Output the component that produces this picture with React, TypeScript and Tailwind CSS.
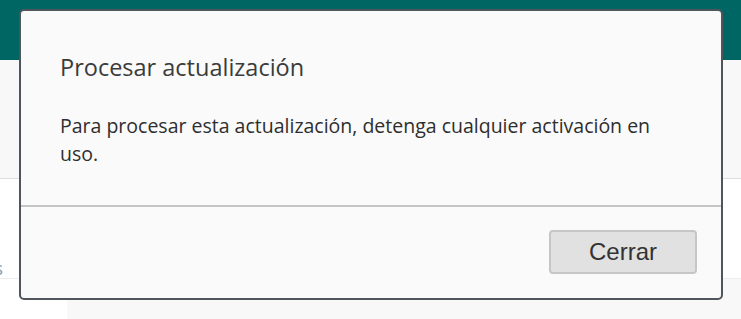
export default function App() {
    return (
        <div className="relative w-[741px] h-[319px] overflow-hidden bg-[#f8f8f8] font-['Open_Sans',sans-serif]">
            {/* page behind the modal */}
            <div className="h-[60px] bg-[#006663]" />
            <div className="h-[118px] bg-[#f8f8f8]" />
            <div className="flex h-[100px] border-t border-[#dddddd] bg-white">
                <div className="w-[20px] flex items-end pb-[0px]">
                    <span className="text-[19px] leading-none text-[#8c9bb0] -ml-[6px]">s</span>
                </div>
            </div>
            <div className="flex h-[41px] border-t border-[#eeeeee]">
                <div className="w-[67px] bg-white" />
                <div className="flex-1 bg-[#f8f8f8]" />
            </div>

            {/* modal */}
            <div className="absolute left-[19px] top-[9px] w-[704px] h-[291px] rounded-[5px] border-2 border-[#50555c] bg-[#fafafa] flex flex-col">
                <div className="h-[194px] px-[39px] pt-[40px]">
                    <h2 className="text-[23.5px] leading-[32px] text-[#3b3b3b]">Procesar actualización</h2>
                    <p className="mt-[29px] w-[610px] text-[19.5px] leading-[28px] text-[#2e2e2e]">
                        Para procesar esta actualización, detenga cualquier activación en uso.
                    </p>
                </div>
                <div className="h-[2px] bg-[#c4c4c4]" />
                <div className="flex-1 flex justify-end items-start pt-[23px] pr-[24px]">
                    <button className="w-[148px] h-[44px] rounded-[4px] border-2 border-[#c6c6c6] bg-[#e1e1e1] text-[24px] text-[#333] font-['Liberation_Sans',Arial,sans-serif]">
                        Cerrar
                    </button>
                </div>
            </div>
        </div>
    )
}
